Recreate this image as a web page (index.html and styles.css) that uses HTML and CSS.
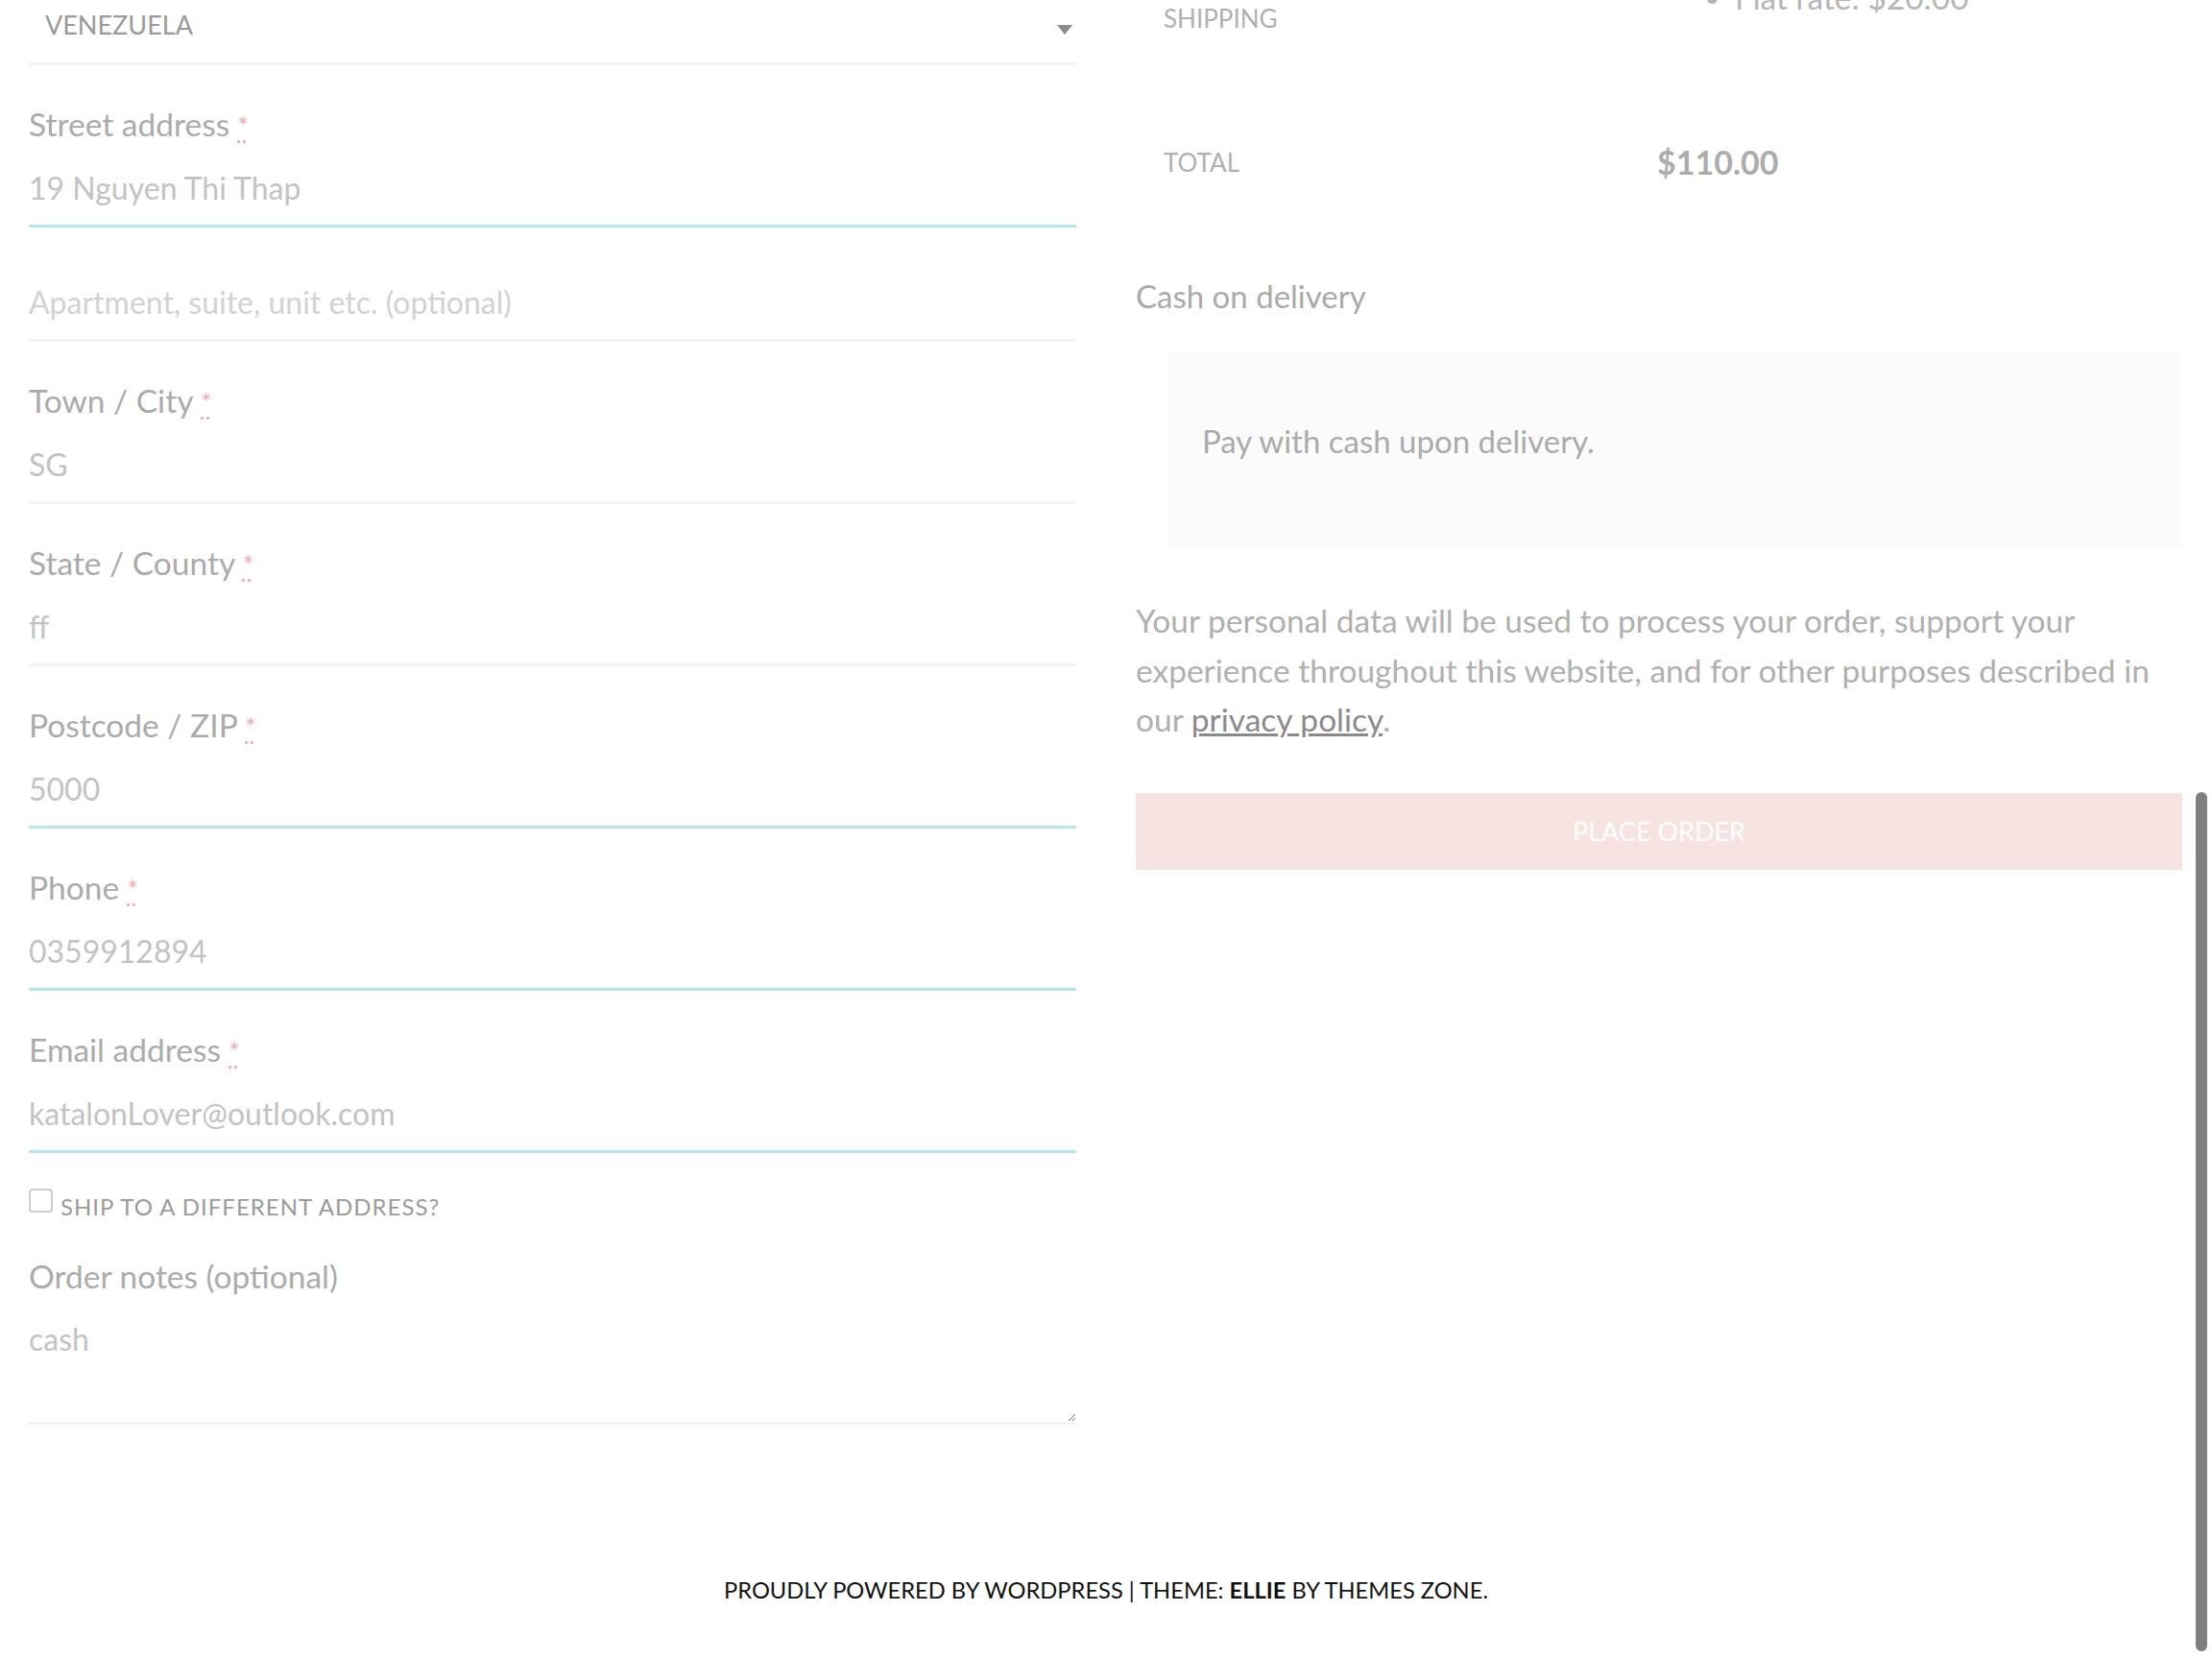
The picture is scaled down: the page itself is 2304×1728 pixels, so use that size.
FILE: index.html
```html
<!DOCTYPE html>
<html lang="en">
<head>
<meta charset="utf-8">
<title>Checkout</title>
<link rel="stylesheet" href="styles.css">
</head>
<body>
<div class="page">
  <form class="checkout">
    <div class="col col-billing">
      <div class="select-field">
        <span class="select-box">
          <span class="select-value">Venezuela</span>
          <svg class="select-arrow" width="16" height="10" viewBox="0 0 16 10" aria-hidden="true"><path d="M0 0H16L8 10Z" fill="#8c8c8c"/></svg>
        </span>
      </div>
      <div class="field">
        <label class="field-label">Street address <abbr class="required" title="required">*</abbr></label>
        <input class="input is-valid" type="text" value="19 Nguyen Thi Thap">
      </div>
      <div class="field field-nolabel">
        <input class="input" type="text" placeholder="Apartment, suite, unit etc. (optional)">
      </div>
      <div class="field">
        <label class="field-label">Town / City <abbr class="required" title="required">*</abbr></label>
        <input class="input" type="text" value="SG">
      </div>
      <div class="field">
        <label class="field-label">State / County <abbr class="required" title="required">*</abbr></label>
        <input class="input" type="text" value="ff">
      </div>
      <div class="field">
        <label class="field-label">Postcode / ZIP <abbr class="required" title="required">*</abbr></label>
        <input class="input is-valid" type="text" value="5000">
      </div>
      <div class="field">
        <label class="field-label">Phone <abbr class="required" title="required">*</abbr></label>
        <input class="input is-valid" type="tel" value="0359912894">
      </div>
      <div class="field">
        <label class="field-label">Email address <abbr class="required" title="required">*</abbr></label>
        <input class="input is-valid" type="email" value="katalonLover@outlook.com">
      </div>
      <h3 class="ship-to">
        <label class="ship-to-label"><input class="checkbox" type="checkbox"><span>Ship to a different address?</span></label>
      </h3>
      <div class="field field-notes">
        <label class="field-label">Order notes (optional)</label>
        <textarea class="textarea">cash</textarea>
      </div>
    </div>

    <div class="col col-review">
      <div class="totals">
        <div class="totals-row row-shipping">
          <div class="totals-th">Shipping</div>
          <div class="totals-td">
            <ul class="shipping-methods">
              <li>Flat rate: <span class="amount">$20.00</span></li>
            </ul>
          </div>
        </div>
        <div class="totals-row row-total">
          <div class="totals-th">Total</div>
          <div class="totals-td"><strong class="total-amount">$110.00</strong></div>
        </div>
      </div>

      <div class="payment">
        <div class="payment-method">Cash on delivery</div>
        <div class="payment-box">
          <p>Pay with cash upon delivery.</p>
        </div>
      </div>

      <p class="privacy">Your personal data will be used to process your order, support your experience throughout this website, and for other purposes described in our <a class="privacy-link" href="#">privacy policy</a>.</p>

      <button class="place-order" type="button">Place order</button>
    </div>
  </form>

  <footer class="site-footer">
    <p>Proudly powered by WordPress | Theme: <strong>Ellie</strong> by Themes Zone.</p>
  </footer>
</div>
<div class="scroll-thumb" aria-hidden="true"></div>
</body>
</html>
```
FILE: styles.css
```css
html, body {
  margin: 0;
  padding: 0;
}

body {
  font-family: Lato, "Noto Sans", sans-serif;
  background: #ffffff;
  height: 1728px;
  overflow: hidden;
}

.checkout {
  display: grid;
  grid-template-columns: 1091px 1090px;
  column-gap: 62px;
  padding: 0 31px 0 30px;
  align-items: start;
}

/* ---------- billing column ---------- */

.select-box {
  position: relative;
  display: block;
  padding: 3px 0 17px 17px;
  line-height: 45px;
  font-size: 27px;
  color: #9a9a9a;
  text-transform: uppercase;
  border-bottom: 3px solid #f2f2f2;
}

.select-arrow {
  position: absolute;
  right: 4px;
  top: 26px;
}

.field {
  padding-top: 37px;
}

.field-nolabel {
  padding-top: 32px;
}

.field-label {
  display: block;
  box-sizing: border-box;
  height: 45px;
  padding-top: 2px;
  font-size: 33.5px;
  line-height: 45px;
  color: #ababab;
}

.required {
  color: #f2a9b2;
  font-size: 26px;
  line-height: 1;
  text-decoration: underline dotted #f2a9b2;
  text-underline-offset: 4px;
}

.input {
  display: block;
  width: 100%;
  box-sizing: content-box;
  height: 45px;
  padding: 23px 0 16px;
  margin: 0;
  border: 0;
  border-bottom: 3px solid #f2f2f2;
  background: transparent;
  font-family: inherit;
  font-size: 32px;
  line-height: 45px;
  color: #c3c3c3;
  outline: none;
}

.input::placeholder {
  color: #d2d2d2;
}

.input.is-valid {
  border-bottom-color: #b3e7eb;
}

.ship-to {
  margin: 0;
  padding-top: 34px;
  font-weight: 400;
  font-size: 24px;
  line-height: 1;
}

.ship-to-label {
  font-size: 24px;
  line-height: 1;
  letter-spacing: 1px;
  color: #9b9b9b;
  text-transform: uppercase;
}

.checkbox {
  -webkit-appearance: none;
  appearance: none;
  width: 25px;
  height: 25px;
  box-sizing: border-box;
  margin: 3px 8px 3px 0;
  border: 2px solid #cdcdcd;
  border-radius: 4px;
  background: #fff;
  vertical-align: baseline;
}

.field-notes {
  padding-top: 36px;
}

.textarea {
  display: block;
  width: 100%;
  box-sizing: border-box;
  height: 134px;
  padding: 22px 0 0;
  margin: 0;
  border: 0;
  border-bottom: 3px solid #f2f2f2;
  background: transparent;
  font-family: inherit;
  font-size: 32px;
  line-height: 45px;
  color: #c3c3c3;
  resize: vertical;
  outline: none;
}

/* ---------- review column ---------- */

.totals {
  margin-top: -25px;
}

.totals-row {
  display: grid;
  grid-template-columns: 514px 1fr;
}

.totals-th,
.totals-td {
  padding: 0 29px;
}

.totals-th {
  font-size: 26px;
  line-height: 40px;
  color: #b0b0b0;
  text-transform: uppercase;
}

.row-shipping {
  height: 154px;
  align-items: start;
}

.row-shipping .totals-th {
  padding-top: 24px;
}

.shipping-methods {
  margin: 0;
  padding-left: 81px;
  list-style: disc;
  font-size: 33.5px;
  line-height: 45px;
  color: #b5b5b5;
}

.row-total {
  height: 80px;
  align-items: center;
}

.total-amount {
  font-size: 34px;
  line-height: 40px;
  font-weight: 700;
  color: #acacac;
}

.payment {
  margin-top: 77px;
}

.payment-method {
  font-size: 33px;
  line-height: 45px;
  color: #aaaaaa;
}

.payment-box {
  margin: 36px 0 0 33px;
  padding: 70px 36px 89px;
  background: #fbfbfb;
}

.payment-box p {
  margin: 0;
  font-size: 33px;
  line-height: 45px;
  color: #ababab;
}

.privacy {
  margin: 50px 0 0;
  font-size: 33.5px;
  line-height: 51.5px;
  color: #b0b0b0;
}

.privacy-link {
  color: #8a8a8a;
}

.place-order {
  display: block;
  width: 100%;
  height: 80px;
  margin-top: 50px;
  border: 0;
  background: #f7e4e2;
  color: #ffffff;
  font-family: inherit;
  font-size: 27px;
  text-transform: uppercase;
}

/* ---------- footer ---------- */

.site-footer {
  padding-top: 155px;
  text-align: center;
}

.site-footer p {
  margin: 0;
  font-size: 23.7px;
  line-height: 34px;
  color: #111111;
  text-transform: uppercase;
}

.site-footer strong {
  font-weight: 700;
}

/* overlay scrollbar thumb */
.scroll-thumb {
  position: fixed;
  right: 5px;
  top: 825px;
  width: 12px;
  height: 895px;
  border-radius: 6px;
  background: #7f7f7f;
}
```
